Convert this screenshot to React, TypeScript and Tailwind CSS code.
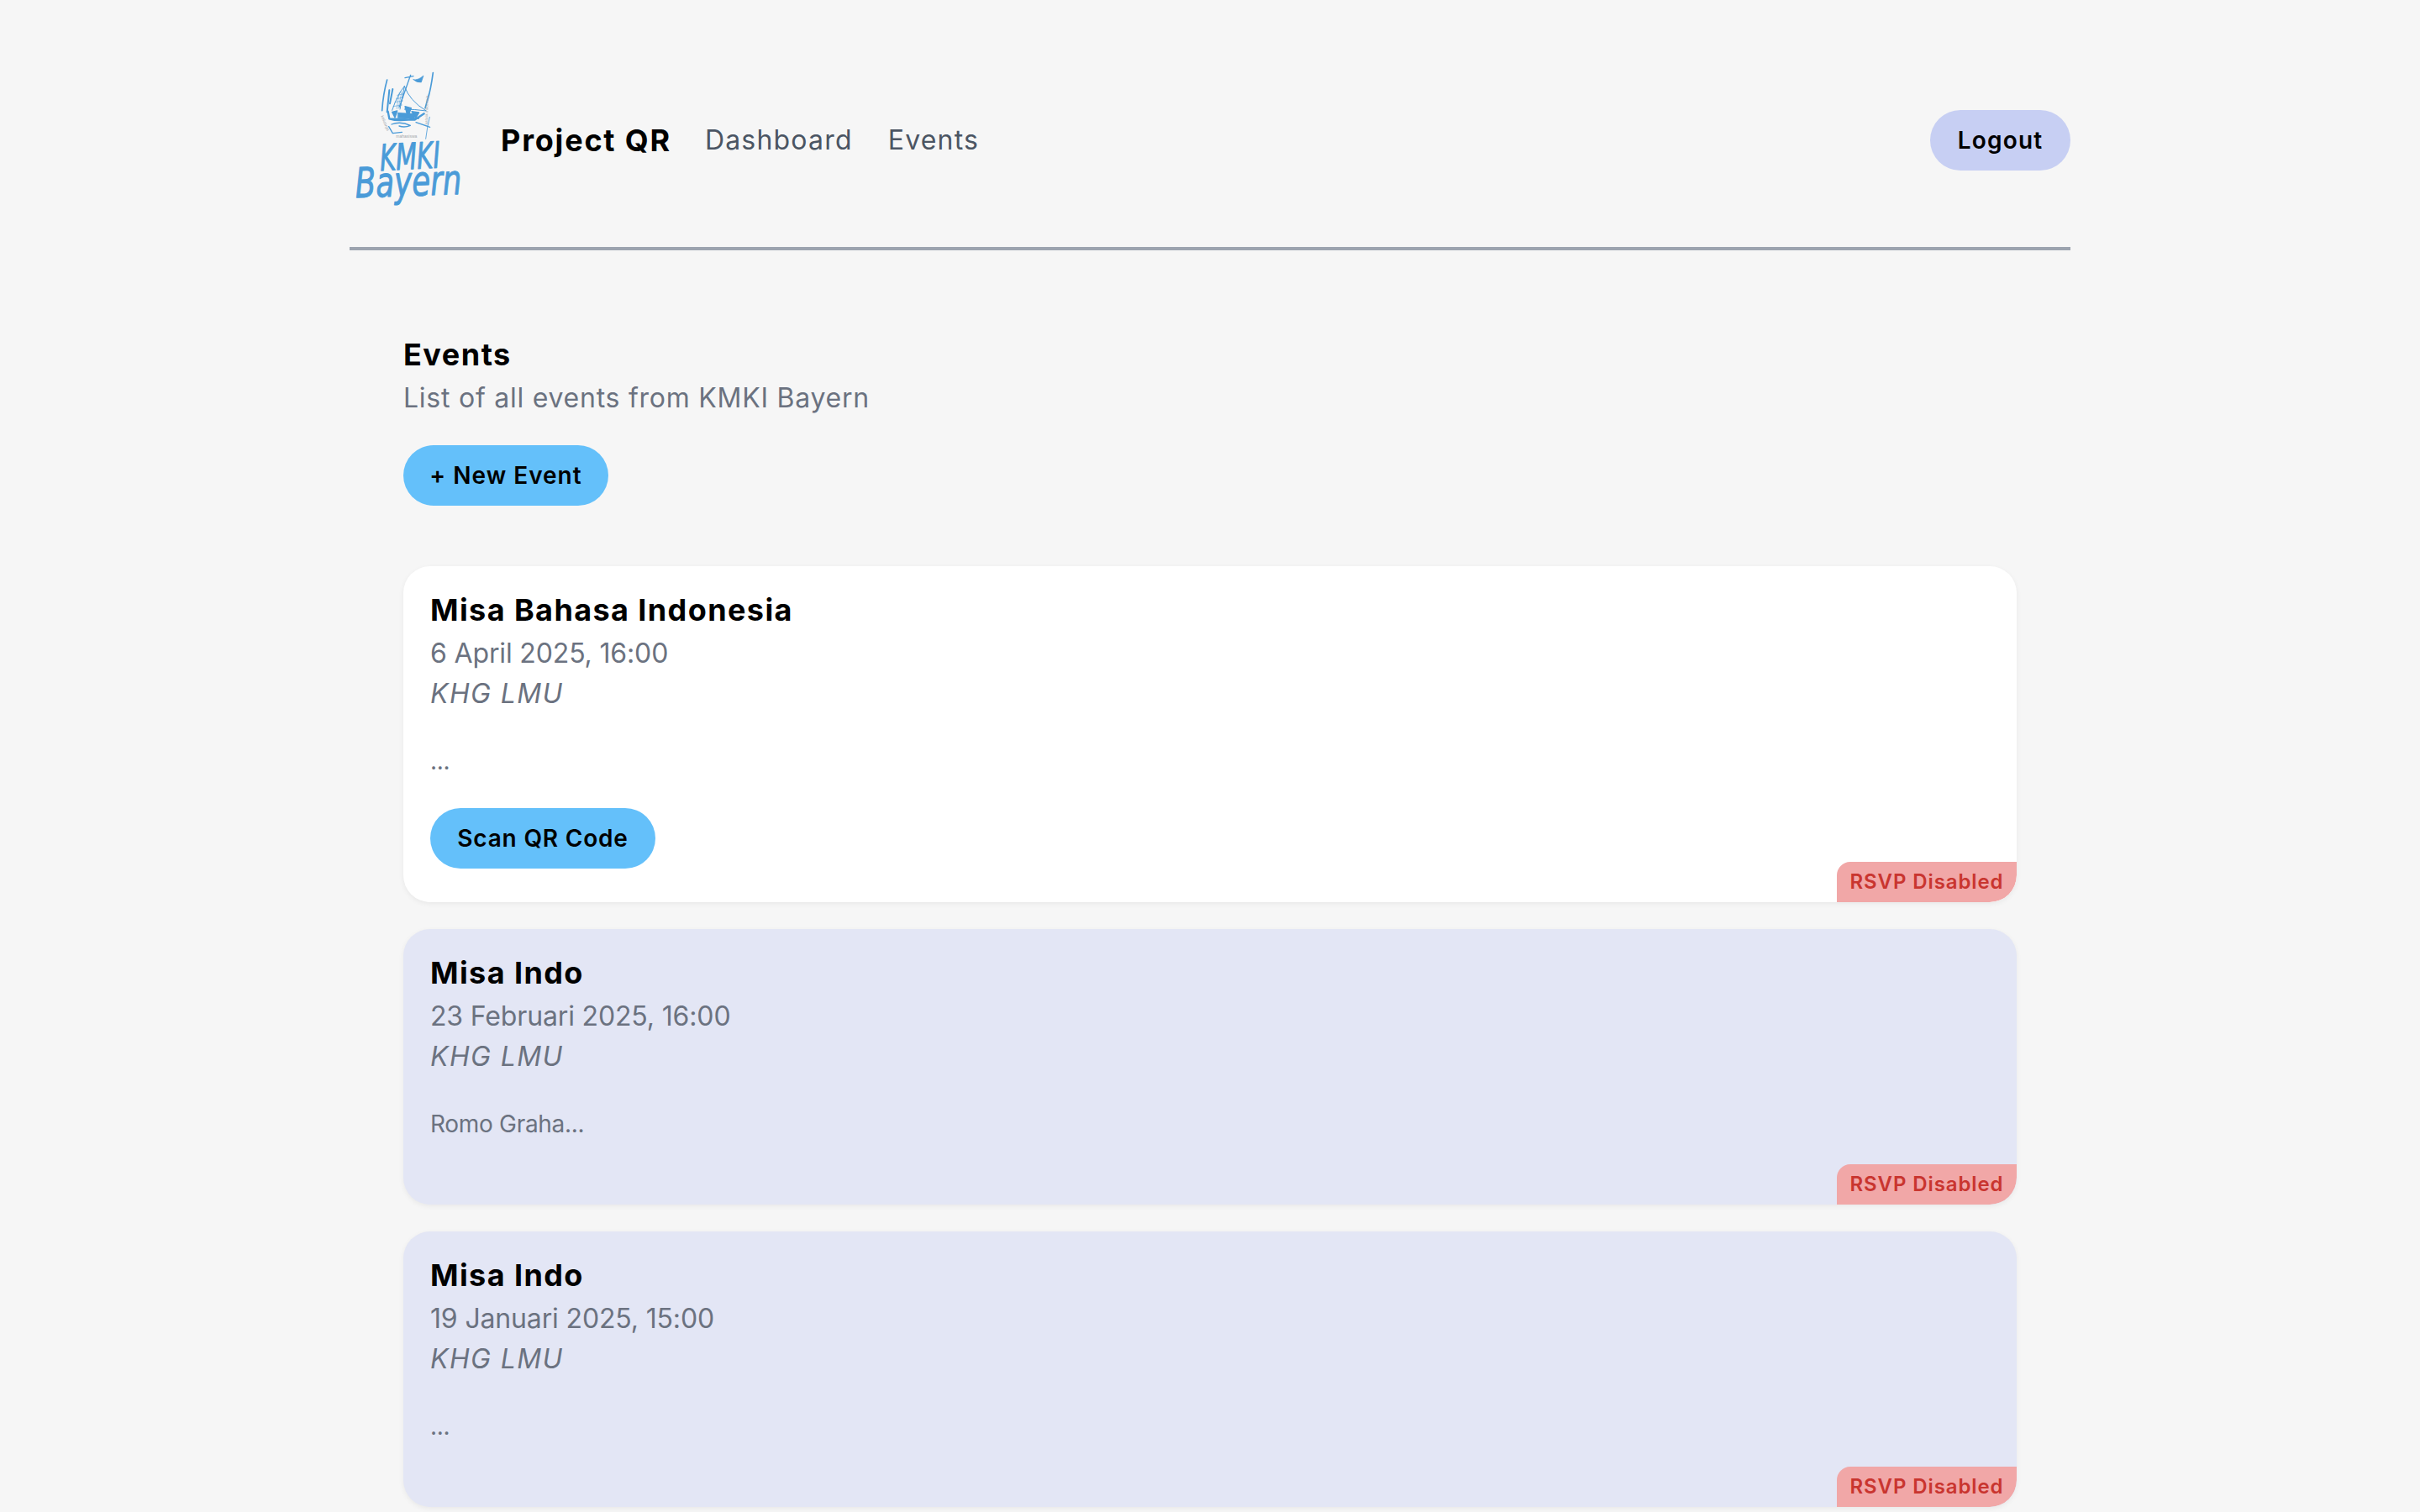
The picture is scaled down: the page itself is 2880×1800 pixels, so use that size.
const sans = "font-['Inter','Liberation_Sans',sans-serif]";

function Logo() {
  const blue = "#4a9bd8";
  return (
    <svg width="154" height="194" viewBox="18 0 462 582" className="shrink-0 overflow-visible">
      <g fill="none" stroke={blue} strokeLinecap="round" strokeLinejoin="round">
        <path d="M152 75 Q138 125 134 185" strokeWidth="5" />
        <path d="M316 50 Q308 110 296 150 M302 125 L288 176" strokeWidth="5" />
        <path d="M236 58 L196 172 M216 68 L246 62" strokeWidth="4" />
        <path d="M246 74 Q262 78 282 60 L274 84 Q258 86 246 74Z" fill={blue} strokeWidth="2" />
        <path d="M160 112 L152 190 M172 108 L162 160" strokeWidth="6" />
        <path d="M214 98 Q190 125 170 184 M214 98 L198 180 M214 98 Q232 150 292 186 Q250 180 214 180" strokeWidth="3" />
        <path d="M180 155 L208 150 M174 170 L205 165 M188 130 L212 125 M185 143 L210 138" strokeWidth="1.8" />
        <path d="M196 120 L186 178 M204 118 L192 178" strokeWidth="1.5" />
        <path d="M155 188 L160 214 L250 218 L284 196 M160 214 Q195 226 264 212" strokeWidth="7" />
        <path d="M170 190 L180 210 L188 186Z M216 170 L226 208 L238 176Z M240 188 L254 212 L266 192Z" fill={blue} strokeWidth="4" />
        <path d="M190 192 L250 196 L250 214 L190 212Z" fill={blue} strokeWidth="1" />
        <path d="M168 234 Q200 222 235 238 Q215 247 195 240 M255 227 L305 244 M158 242 L172 266 L205 262" strokeWidth="4" />
        <path d="M290 286 L296 246 L304 208" strokeWidth="2.5" />
      </g>
      <g fill="#a4a9ad" fontSize="15" fontFamily="'Liberation Sans', sans-serif">
        <text transform="translate(130 205) rotate(68)">keluarga</text>
        <text x="184" y="282">mahasiswa</text>
        <text transform="translate(296 235) rotate(-88)" fontSize="14">katolik indonesia</text>
      </g>
      <g fill={blue} fontFamily="'DejaVu Sans', sans-serif" fontStyle="oblique" stroke={blue} strokeLinejoin="round" strokeWidth="3">
        <text x="128" y="400" fontSize="130" textLength="216" lengthAdjust="spacingAndGlyphs" transform="rotate(-3 128 400)">KMKI</text>
        <text x="40" y="496" fontSize="148" textLength="380" lengthAdjust="spacingAndGlyphs" transform="rotate(-2 40 496)">Bayern</text>
      </g>
    </svg>
  );
}

function Event({ title, date, desc, inter, white, button }: { title: string; date: string; desc: string; inter?: boolean; white?: boolean; button?: boolean }) {
  return (
    <div className={`relative overflow-hidden rounded-[32px] px-8 pt-8 pb-10 shadow-[0_2px_6px_rgba(0,0,0,0.06)] ${white ? "bg-white" : "bg-[#e3e6f5]"}`}>
      <h3 className="text-[36px] leading-10 font-bold tracking-[1.4px] text-black">{title}</h3>
      <p className="mt-2 text-[32px] leading-[48px] font-normal tracking-[-0.15px] text-[#6b7280]">{date}</p>
      <p className="text-[32px] leading-[48px] font-normal tracking-[1.4px] text-[#6b7280] italic">KHG LMU</p>
      <p className={`mt-9 mb-9 text-[28px] leading-10 tracking-[-0.3px] text-[#6b7280]`}>{desc}</p>
      {button && (
        <button className="h-[72px] w-[268px] rounded-full bg-[#64c0fa] text-[28px] font-semibold tracking-[0.8px] text-black">Scan QR Code</button>
      )}
      <div className="absolute right-0 bottom-0 flex h-12 w-[214px] items-center justify-center rounded-tl-2xl rounded-br-[32px] bg-[#f1a7a7] text-[24px] font-semibold tracking-[0.9px] text-[#c9352f]">RSVP Disabled</div>
    </div>
  );
}

export default function App() {
  return (
    <div className={`min-h-screen bg-[#f6f6f6] ${sans}`}>
      <div className="mx-auto w-[2048px]">
        <header className="flex items-center border-b-4 border-[#9ca3af] pt-[70px] pb-[30px]">
          <Logo />
          <span className="ml-[26px] text-[36px] leading-[48px] font-bold tracking-[1.8px] text-black">Project QR</span>
          <nav className="ml-[40px] flex gap-[42px] text-[32px] leading-[48px] font-normal tracking-[1.2px] text-[#4b5563]">
            <span>Dashboard</span>
            <span>Events</span>
          </nav>
          <button className="ml-auto h-[72px] w-[167px] rounded-full bg-[#c7cff3] text-[28px] font-semibold tracking-[1.2px] text-black">Logout</button>
        </header>
        <main className="px-16 pt-[100px]">
          <h1 className="text-[36px] leading-12 font-bold tracking-[1.5px] text-black">Events</h1>
          <p className="mt-1 text-[32px] leading-12 font-normal tracking-[0.75px] text-[#6b7280]">List of all events from KMKI Bayern</p>
          <button className="mt-8 block h-[72px] w-[244px] rounded-full bg-[#64c0fa] text-[28px] font-semibold tracking-[1px] text-black">+ New Event</button>
          <div className="mt-[72px] flex flex-col gap-8">
            <Event white button title="Misa Bahasa Indonesia" date="6 April 2025, 16:00" desc="..." />
            <Event inter title="Misa Indo" date="23 Februari 2025, 16:00" desc="Romo Graha..." />
            <Event title="Misa Indo" date="19 Januari 2025, 15:00" desc="..." />
          </div>
        </main>
      </div>
    </div>
  );
}
